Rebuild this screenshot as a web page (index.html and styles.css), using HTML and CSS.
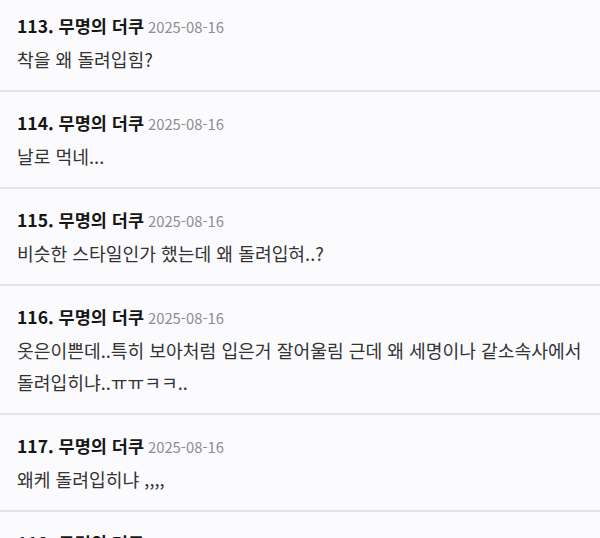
FILE: index.html
```html
<!DOCTYPE html>
<html lang="ko">
<head>
  <meta charset="UTF-8" />
  <meta name="viewport" content="width=device-width, initial-scale=1.0"/>
  <title>댓글</title>
  <link rel="stylesheet" href="styles.css">
</head>
<body>
  <ul class="comments">
    <li class="comment">
      <div class="comment-head"><span class="author">113. 무명의 더쿠</span><span class="date">2025-08-16</span></div>
      <p class="comment-body">착을 왜 돌려입힘?</p>
    </li>
    <li class="comment">
      <div class="comment-head"><span class="author">114. 무명의 더쿠</span><span class="date">2025-08-16</span></div>
      <p class="comment-body">날로 먹네...</p>
    </li>
    <li class="comment">
      <div class="comment-head"><span class="author">115. 무명의 더쿠</span><span class="date">2025-08-16</span></div>
      <p class="comment-body">비슷한 스타일인가 했는데 왜 돌려입혀..?</p>
    </li>
    <li class="comment">
      <div class="comment-head"><span class="author">116. 무명의 더쿠</span><span class="date">2025-08-16</span></div>
      <p class="comment-body">옷은이쁜데..특히 보아처럼 입은거 잘어울림 근데 왜 세명이나 같소속사에서 돌려입히냐..ㅠㅠㅋㅋ..</p>
    </li>
    <li class="comment">
      <div class="comment-head"><span class="author">117. 무명의 더쿠</span><span class="date">2025-08-16</span></div>
      <p class="comment-body">왜케 돌려입히냐 ,,,,</p>
    </li>
    <li class="comment">
      <div class="comment-head"><span class="author">118. 무명의 더쿠</span><span class="date">2025-08-16</span></div>
      <p class="comment-body">...</p>
    </li>
  </ul>
</body>
</html>
```

FILE: styles.css
```css
body {
  margin: 0;
  background: #fbfbfd;
  font-family: "Noto Sans CJK KR", "Noto Sans", sans-serif;
  color: #2b2b2b;
  overflow: hidden;
}
.comments {
  list-style: none;
  margin: -5px 0 0;
  padding: 0;
}
.comment {
  padding: 17px 8px 15px 17px;
  border-bottom: 2px solid #e4e4e7;
}
.comment-head {
  line-height: 28px;
  height: 28px;
}
.author {
  font-size: 17.5px;
  font-weight: 700;
  color: #161616;
}
.date {
  margin-left: 4px;
  font-size: 14.8px;
  color: #8d8d92;
}
.comment-body {
  margin: 3px 0 0;
  font-size: 18.2px;
  line-height: 32px;
  color: #333;
  word-break: keep-all;
}
```
